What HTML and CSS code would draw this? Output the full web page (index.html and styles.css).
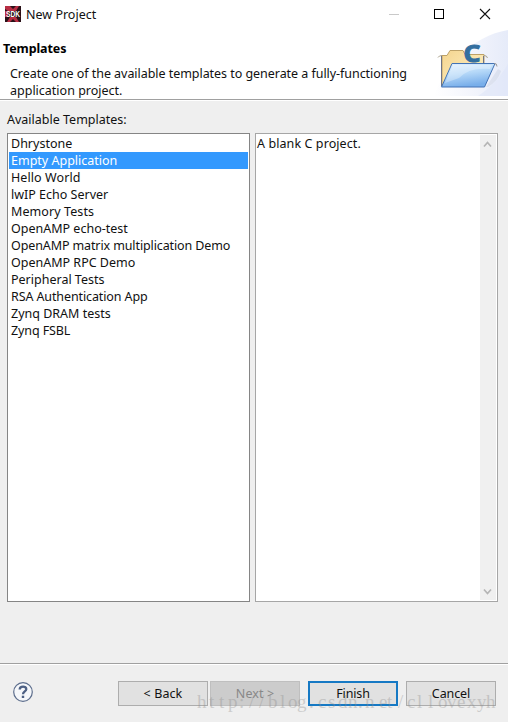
FILE: index.html
```html
<!DOCTYPE html>
<html lang="en">
<head>
<meta charset="utf-8">
<title>New Project</title>
<link rel="stylesheet" href="styles.css">
</head>
<body>
<div class="dialog">
  <header class="titlebar">
    <svg class="app-icon" width="16" height="16" viewBox="0 0 16 16">
      <rect width="16" height="16" fill="#2a1118"/>
      <path d="M0 0h5l3 3 3-3h3l-3 5H3L0 3zM0 5h3v6H0zM2 16l3-5h6l3 5h-3l-3-3-3 3z" fill="#b72d43"/>
      <text class="app-icon-text" x="1" y="11" textLength="14" lengthAdjust="spacingAndGlyphs">SDK</text>
    </svg>
    <span class="window-title">New Project</span>
    <svg class="window-controls" width="102" height="12" viewBox="0 0 102 12" fill="none">
      <path d="M0 6.500h10" stroke="#c9c9c9"/>
      <rect x="45.500" y="1.500" width="9" height="9" stroke="#000"/>
      <path d="M91 1l10 10M101 1L91 11" stroke="#111" stroke-width="1.100"/>
    </svg>
  </header>
  <section class="banner">
    <div class="banner-copy">
      <h1>Templates</h1>
      <p><span class="snug">Create one of the available templates to generate a fully-functioning</span><br><span>application project.</span></p>
    </div>
    <svg class="banner-art" width="78" height="68" viewBox="430 28 78 68">
      <defs>
        <linearGradient id="haze" x1="0" y1="0" x2="1" y2="0"><stop stop-color="#fff"/><stop offset=".5" stop-color="#f3f5fc"/><stop offset="1" stop-color="#e6ebf9"/></linearGradient>
        <linearGradient id="back" x1="0" y1="0" x2="1" y2="1"><stop stop-color="#f4d58f"/><stop offset="1" stop-color="#fff3cb"/></linearGradient>
        <linearGradient id="front" x1="0" y1="0" x2=".3" y2="1"><stop stop-color="#e4f2ff"/><stop offset=".5" stop-color="#b5d8f8"/><stop offset="1" stop-color="#78aeea"/></linearGradient>
      </defs>
      <path d="M434 96C444 66 472 36 508 30V96z" fill="url(#haze)"/>
      <path d="M478 96c12-8 22-18 30-32v32z" fill="#dfe6f8" opacity=".6"/>
      <path d="M486 87l12-18 3 2q-3 10-13 16z" fill="#b9c2d8" opacity=".3"/>
      <path d="M442 86V55.500h5l3-5h13l2 4h19v31z" fill="url(#back)" stroke="#bda268"/>
      <path d="M438 57.500q1-2 4-2M484 55.500q3 0 3.500 2.500" fill="none" stroke="#aaa28d"/>
      <path d="M441.500 56v30M483.500 56v8" stroke="#6f7485"/>
      <text class="c-mark" x="463.500" y="62" textLength="17" lengthAdjust="spacingAndGlyphs">C</text>
      <path d="M452 63.500h43L484.500 87H441.500z" fill="url(#front)" stroke="#4273b6" stroke-linejoin="round"/>
      <path d="M453 65h39l-2 4q-21-2-31 9l-14 5z" fill="#fff" opacity=".3"/>
      <path d="M494 63.500q3-.5 3 3" fill="none" stroke="#999"/>
    </svg>
  </section>
  <main class="content">
    <div class="list-label"><span>Available Templates:</span></div>
    <div class="panes">
      <ul class="list">
        <li>Dhrystone</li>
        <li class="selected">Empty Application</li>
        <li class="wide">Hello World</li>
        <li>lwIP Echo Server</li>
        <li class="wide">Memory Tests</li>
        <li>OpenAMP echo-test</li>
        <li class="tight">OpenAMP matrix multiplication Demo</li>
        <li>OpenAMP RPC Demo</li>
        <li>Peripheral Tests</li>
        <li class="tight">RSA Authentication App</li>
        <li>Zynq DRAM tests</li>
        <li class="tight">Zynq FSBL</li>
      </ul>
      <div class="description">
        <span class="wide">A blank C project.</span>
        <div class="scrollbar">
          <svg width="9" height="7" viewBox="0 0 9 7"><path d="M1 5.500l3.500-4 3.500 4" fill="none" stroke="#b5b5b5" stroke-width="1.700"/></svg>
          <svg width="9" height="7" viewBox="0 0 9 7"><path d="M1 1.500l3.500 4 3.500-4" fill="none" stroke="#b5b5b5" stroke-width="1.700"/></svg>
        </div>
      </div>
    </div>
  </main>
  <footer class="footer">
    <svg class="help" width="20" height="20" viewBox="0 0 20 20">
      <circle cx="10" cy="10" r="9.300" fill="#f5f7fa" stroke="#5c6d8c" stroke-width="1.200"/>
      <path d="M6.700 7.500C6.700 3.500 13.500 3.700 13.300 7.300C13.200 9.500 10 9.500 10 12.300" fill="none" stroke="#4d6084" stroke-width="2.300"/>
      <rect x="8.800" y="13.700" width="2.400" height="2.300" fill="#4d6084"/>
    </svg>
    <div class="nav">
      <button class="wide">&lt; Back</button>
      <button class="disabled wide" disabled>Next &gt;</button>
    </div>
    <button class="primary tight">Finish</button>
    <button class="tight">Cancel</button>
    <svg class="watermark" width="306" height="24"><text y="16" x="1 13 23 32 43 53 63 72 84 92 101 113 122 132 142 152 162 169 183 191 202 211 221 232 242 251 261 271 281 290">http://blog.csdn.net/cllovexyh</text></svg>
  </footer>
</div>
</body>
</html>
```
FILE: styles.css
```css
* { box-sizing: border-box; }
body {
  margin: 0;
  font: 12.5px/17px "Noto Sans", "Open Sans", sans-serif;
  color: #111;
}
.dialog {
  width: 508px;
  height: 722px;
  display: flex;
  flex-direction: column;
  background: #efefef;
  overflow: hidden;
}
.titlebar {
  height: 28px;
  flex: none;
  display: flex;
  align-items: center;
  padding: 0 17px 0 5px;
  background: #fff;
}
.app-icon-text { font: bold 8.5px "Liberation Sans", sans-serif; fill: #fff; }
.window-title { margin-left: 5px; padding-top: 1px; }
.window-controls { margin-left: auto; }
.snug { letter-spacing: -.045px; }
.tight { letter-spacing: -.11px; }
.wide { letter-spacing: .09px; }
.banner {
  height: 72px;
  flex: none;
  display: flex;
  justify-content: space-between;
  background: #fff;
  border-bottom: 1px solid #a0a0a0;
}
.banner-copy { padding: 12px 0 0 3px; white-space: nowrap; }
h1 { margin: 0; font-size: 12.5px; line-height: 17px; color: #000; letter-spacing: -.1px; }
.banner p { margin: 8px 0 0 7px; }
.banner-art { flex: none; }
.c-mark { font: bold 24px "Noto Sans", sans-serif; fill: #346f9f; stroke: #346f9f; stroke-width: 1px; }
.content {
  flex: 1;
  padding: 10px 10px 0 7px;
  border-top: 1px solid #fff;
}
.list-label { height: 22px; }
.panes { display: flex; gap: 5px; height: 469px; }
.list, .description { width: 243px; background: #fff; border: 1px solid #858585; }
.list { margin: 0; padding: 1px; list-style: none; }
.list li { height: 17px; padding-left: 2px; white-space: nowrap; }
.list .selected { background: #3399fe; color: #fff; }
.description {
  display: flex;
  justify-content: space-between;
  padding: 1px;
  border-color: #a6a6a6;
}
.scrollbar {
  width: 16px;
  background: #f0f0f0;
  display: flex;
  flex-direction: column;
  align-items: center;
  justify-content: space-between;
  padding: 6px 1px 5px 0;
}
.footer {
  position: relative;
  height: 59px;
  flex: none;
  display: flex;
  align-items: flex-start;
  gap: 8px;
  padding: 17px 12px 0 13px;
  border-top: 1px solid #a0a0a0;
  box-shadow: inset 0 1px #fff;
}
.help { margin-top: 1px; }
.nav { display: flex; gap: 2px; margin-left: auto; }
button {
  width: 90px;
  height: 25px;
  padding: 0;
  border: 1px solid #adadad;
  background: #e1e1e1;
  color: #111;
  font: inherit;
}
button.disabled { background: #cccccc; border-color: #bfbfbf; color: #888; }
button.primary { border: 2px solid #1679c4; }
.watermark {
  position: absolute;
  left: 196px;
  top: 28px;
  font: 19px "Liberation Serif", serif;
  fill: #8c8c8c;
  opacity: .35;
}
```
